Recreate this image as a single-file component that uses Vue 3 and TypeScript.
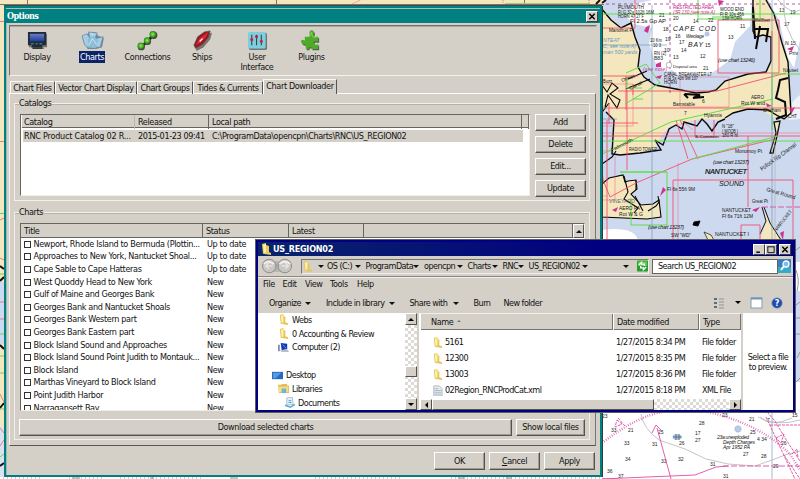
<script setup lang="ts">
interface MapText { x: number; y: number; t: string; s?: number; w?: number; c?: string; r?: number }

const tools = [
  { name: 'Display', w: 54 },
  { name: 'Charts', w: 56 },
  { name: 'Connections', w: 55 },
  { name: 'Ships', w: 54 },
  { name: 'User Interface', w: 56 },
  { name: 'Plugins', w: 53 },
]
const tabs = [
  { name: 'Chart Files', w: 45 },
  { name: 'Vector Chart Display', w: 82 },
  { name: 'Chart Groups', w: 56 },
  { name: 'Tides & Currents', w: 70 },
  { name: 'Chart Downloader', w: 74 },
]
const catalogButtons = ['Add', 'Delete', 'Edit...', 'Update']
const charts: [string, string][] = [
  ['Newport, Rhode Island to Bermuda (Plottin...', 'Up to date'],
  ['Approaches to New York, Nantucket Shoal...', 'Up to date'],
  ['Cape Sable to Cape Hatteras', 'Up to date'],
  ['West Quoddy Head to New York', 'New'],
  ['Gulf of Maine and Georges Bank', 'New'],
  ['Georges Bank and Nantucket Shoals', 'New'],
  ['Georges Bank Western part', 'New'],
  ['Georges Bank Eastern part', 'New'],
  ['Block Island Sound and Approaches', 'New'],
  ['Block Island Sound Point Judith to Montauk...', 'New'],
  ['Block Island', 'New'],
  ['Marthas Vineyard to Block Island', 'New'],
  ['Point Judith Harbor', 'New'],
  ['Narragansett Bay', 'New'],
]
const crumbs = [
  { name: 'OS (C:)', w: 38.5 },
  { name: 'ProgramData', w: 58.5 },
  { name: 'opencpn', w: 43.5 },
  { name: 'Charts', w: 35 },
  { name: 'RNC', w: 26 },
  { name: 'US_REGION02', w: 64 },
]
const menus = [
  { name: 'File', w: 19.5 }, { name: 'Edit', w: 22.5 }, { name: 'View', w: 25 },
  { name: 'Tools', w: 27 }, { name: 'Help', w: 20 },
]
const commands = [
  { name: 'Organize', w: 57, arrow: true },
  { name: 'Include in library', w: 83.5, arrow: true },
  { name: 'Share with', w: 64, arrow: true },
  { name: 'Burn', w: 30, arrow: false },
  { name: 'New folder', w: 50, arrow: false },
]
const files = [
  { name: '5161', date: '1/27/2015 8:34 PM', type: 'File folder' },
  { name: '12300', date: '1/27/2015 8:35 PM', type: 'File folder' },
  { name: '13003', date: '1/27/2015 8:36 PM', type: 'File folder' },
  { name: '02Region_RNCProdCat.xml', date: '1/27/2015 8:18 PM', type: 'XML File' },
]

const labels: MapText[] = [
  { x: 618, y: 9, t: 'PLYMOUTH', w: 26 }, { x: 618, y: 13.5, t: 'Fl G 32s 102ft 16M', w: 36 }, { x: 618, y: 18, t: 'HORN 47 27 F', w: 26 },
  { x: 720, y: 11, t: 'WOOD END', w: 24 }, { x: 720, y: 15.5, t: 'Fl R 10s 45ft', w: 24 }, { x: 722, y: 20, t: '13M HORN', w: 20 },
  { x: 609, y: 32, t: 'Manomet Pt', w: 25 }, { x: 630, y: 23, t: 'Fl 2.5s Gp AP', w: 36, s: 4.5 },
  { x: 650, y: 42, t: '10 Km', w: 12 }, { x: 653, y: 47, t: '10 3', w: 8 }, { x: 654, y: 55, t: 'RN (2)', w: 12 }, { x: 654, y: 60, t: 'B83', w: 9 },
  { x: 673, y: 67.5, t: 'Disposal area', w: 24, s: 4 },
  { x: 664, y: 75.5, t: 'CANAL BREAKWATER LT', w: 48 }, { x: 664, y: 79.8, t: 'Fl R 5s 43ft 9M 107', w: 34 }, { x: 664, y: 84.2, t: 'HORN', w: 13 },
  { x: 673, y: 106, t: 'Barnstable', w: 22 }, { x: 704, y: 117, t: 'Hyannis', w: 18 }, { x: 754, y: 22, t: 'Wellfleet', w: 16 },
  { x: 751, y: 99, t: 'AERO', w: 13, s: 5.5 }, { x: 741, y: 104.5, t: 'Rot W and', w: 24, s: 5.5 }, { x: 763, y: 112, t: 'Chatham', w: 18 },
  { x: 629, y: 151, t: 'RADIO TOWER', w: 28 }, { x: 722, y: 128, t: 'N "18"', w: 12 }, { x: 722, y: 132.7, t: '( WOOB )', w: 16 }, { x: 722, y: 137.4, t: '180 R ht', w: 16 },
  { x: 695, y: 138, t: 'S Common', w: 24, s: 4 }, { x: 735, y: 153, t: 'Monomoy Pt', w: 27 },
  { x: 667, y: 191, t: 'Fl 6s 55ft 9M', w: 28, s: 5.5 }, { x: 609, y: 203, t: 'VINEYARD', w: 26, c: '#667' },
  { x: 619, y: 210, t: 'AERO PA', w: 21, s: 5.2 }, { x: 619, y: 216, t: 'Rot W & G', w: 24, s: 5.2 },
  { x: 752, y: 203, t: 'Great Pt', w: 16 }, { x: 722, y: 212, t: 'NANTUCKET', w: 29, s: 5.2 }, { x: 722, y: 217.5, t: 'Fl 6s 71ft 12M', w: 31, s: 5.2 },
  { x: 715, y: 236, t: 'NANTUCKET I', w: 34, s: 6 }, { x: 671, y: 237, t: 'SW "WD"', w: 20 },
  { x: 612, y: 152, t: 'Falmouth', w: 24, r: -28 }, { x: 762, y: 171, t: 'Pollock Rip Channel', w: 43, s: 6, r: -36 },
  { x: 766, y: 191, t: 'Great Round', w: 30, s: 5.6, r: 16 }, { x: 776, y: 232, t: 'NANTUCKET', w: 26, r: -52 },
  { x: 785, y: 45, t: 'N 15', w: 11 }, { x: 789, y: 55, t: 'Priv', w: 9 }, { x: 783, y: 72, t: 'Nauset', w: 15 }, { x: 788, y: 118, t: 'CHT', w: 9 },
  { x: 622, y: 82, t: 'Onset', w: 14, r: -20 }, { x: 630, y: 90, t: 'Canal', w: 14, r: -26 }, { x: 603, y: 83, t: 'Buzz', w: 9 },
]
const italics: MapText[] = [
  { x: 673, y: 31, t: 'CAPE COD', s: 6.8, w: 43 }, { x: 688, y: 46.5, t: 'BAY', s: 6.8, w: 15 }, { x: 686, y: 38, t: 'Wreckage', s: 4.5, w: 18 },
  { x: 718, y: 62, t: '(use chart 13246)', s: 5.3, w: 37 }, { x: 713, y: 164, t: '(use chart 13237)', s: 5.3, w: 36 }, { x: 648, y: 229, t: '(use chart 13237)', s: 5.3, w: 36 },
]
const sounding: [number, number, string][] = [
  [659, 17, '21'], [673, 19.5, '20'], [663, 31, '18'], [693, 23, '14'], [679, 44, '17'], [673, 59, '13'], [705, 46.5, '15'],
  [675, 38, '16'], [728, 39, '13'], [700, 58, '12'], [740, 28, '11'], [665, 41, '19'], [664, 52, '10'], [681, 52, '14'],
  [703, 70, '21'], [708, 22, '22'], [779, 12, '13'], [784, 26, '17'], [790, 14, '19'], [702, 103, '6'],
  [684, 115, '7'], [628, 432, '21'], [611, 432, '33'], [602, 418, '23'], [624, 445, '33'], [625, 461, '34'], [607, 473, '36'],
  [618, 478, '37'], [652, 446, '31'], [658, 434, '25'], [679, 445, '26'], [678, 461, '32'], [695, 442, '27'], [699, 425, '28'],
  [695, 435, '17'], [710, 466, '31'], [661, 463, '33'], [722, 417, '23'], [750, 434, '25'], [743, 456, '27'], [761, 458, '28'],
  [757, 441, '4 34'], [749, 421, '21'], [767, 422, '7'], [781, 445, '26'], [792, 417, '15'], [773, 468, '29'], [723, 478, '31'],
]
</script>

<template>
  <main class="desktop">
    <svg class="sea-map" viewBox="0 0 800 479" width="800" height="479">
      <rect width="800" height="479" fill="#f4e7bd" />
      <path d="M601 0V9L606 14L611 20L621 27L631 24L635 37L640 50L638 67L644 77L655 85L676 89L702 92L714 90L725 81L748 74L765 73L771 64V37L762 36L757 38L753 31V0Z" fill="#cdd9ee" />
      <path d="M600 22L610 20L600 6Z" fill="#f4e7bd" />
      <path d="M634 4L652 0H752L750 26L735 42L730 60L712 73L700 75L688 73L680 77L672 70L665 72L656 64L649 44L652 28L634 24L627 18Z" fill="#fff" />
      <path d="M766 0L774 14L782 42L788 60L791 112L784 120L775 118L758 108L733 113L725 120L700 119L682 123L670 126L661 137L656 148L640 153L620 155L612 150L614 120L605 108L600 100V240H800V0Z" fill="#cdd9ee" />
      <path d="M768 0H800V40L794 68L788 58L779 20Z" fill="#fff" />
      <path d="M800 95Q790 101 789 113V120L800 119Z" fill="#fff" opacity=".65" />
      <path d="M602 230Q634 226 638 240H602Z" fill="#fff" />
      <path d="M600 412H800V479H600Z" fill="#fff" />
      <path d="M602 184L609 178L623 175L625 182L628 181L636 180L637 189L631 194L641 205L653 204L659 200L661 217L647 219L624 218L602 217Z" fill="#f4e7bd" stroke="#000" stroke-width="1.1" />
      <path d="M764 212L781 240H760L766 222Z" fill="#f4e7bd" />
      <path d="M762 207L766 221L760 234M764 207L770 223L781 240" fill="none" stroke="#111" stroke-width="1" />
      <path d="M780 121L777 136L773 153L770 153L776 133L774 122Z" fill="#f4e7bd" stroke="#111" stroke-width="1.3" />
      <path d="M704 232L711 235L714 240H708Z" fill="#f4e7bd" stroke="#111" stroke-width=".7" />
      <path d="M694 222L700 221L698 226L693 225Z" stroke="#111" />
      <g fill="none" stroke="#080808" stroke-width="1.4">
        <path d="M601 8L606 14L611 20L621 28L631 23L635 37L640 50L638 67L644 77L655 85L676 89L696 93L708 92L716 90L725 81L748 74L766 72L771 61V37L763 35L756 37L753 31V0" />
        <path d="M766 0L774 14L782 43L788 62L791 113L784 119L778 116L768 110L748 109L733 113L725 118" />
        <path d="M685 94L700 95L693 98L704 97M684 94L688 98M753 7L755 39M760 26L756 49M755 29H768L766 42M788 78L780 80L778 90L776 98L785 102L786 115L776 119" stroke-width="2" />
        <path d="M725 119L718 122L712 131L707 124L702 119L697 126L684 122L682 129L676 125L669 129L663 145L655 140L661 150L640 153L620 155L612 154L614 120L606 112" />
        <path d="M602 85L607 92L612 83L618 88L610 94L620 100L617 108L608 95L605 107M602 164L612 157L616 151M600 115L609 103M628 79L647 71M626 89L650 79M624 176L628 192L624 199L638 208L634 213M636 181L636 190M648 211L656 206L659 202L658 196M635 196L643 211" stroke-width="1.1" />
      </g>
      <g fill="none" stroke="#f4506c" stroke-width=".9">
        <path d="M600 28H635V0M600 76H638M600 136H800M618 91H717L786 73M718 20H779V73H718ZM603 108H800M626 76V110M772 31V60M600 123H638M607 120V240M627 90V170M673 240V180H793V240M741 225H760V240H741ZM633 84V95M609 103V124M748 136V207M714 120V137H695V120M601 160L603 180L610 197L636 183L692 159L775 139M676 120L688 159M680 120L698 159" />
        <path d="M680 77H729V107H680ZM678 163V240M600 133H800M601 84H633V126H600M600 196H607M601 151H613M615 156V200H601M681 120L693 130" opacity=".5" />
      </g>
      <g fill="none" stroke="#62dc48" stroke-width="1">
        <path d="M698 0V19M698 19H760V0M600 14H800M712 17H740M772 73V130M772 74H800M600 141H800M626 73L646 64L660 83L625 104M627 77V88H642M633 99H643M620 172H667V225H631V198M600 155L671 122L773 99M692 159L778 136" />
        <path d="M620 172H667V172" />
      </g>
      <path d="M652 5V240M772 0V240M600 119H617M772 412V479M600 45H667" fill="none" stroke="#668fb6" stroke-width=".6" />
      <path d="M670 0V96M600 4H800" fill="none" stroke="#a82d83" stroke-width=".8" stroke-dasharray="3 3" />
      <g class="map-label">
        <text v-for="l in labels" :key="l.t + l.x" :x="l.x" :y="l.y" :font-size="l.s ?? 4.8" :textLength="l.w" lengthAdjust="spacingAndGlyphs" :fill="l.c ?? '#151515'" :transform="l.r ? `rotate(${l.r} ${l.x} ${l.y})` : undefined">{{ l.t }}</text>
        <text v-for="s in sounding" :key="`${s[0]}-${s[1]}`" :x="s[0]" :y="s[1]" font-size="5" fill="#222">{{ s[2] }}</text>
        <g class="map-italic">
          <text v-for="l in italics" :key="l.t + l.y" :x="l.x" :y="l.y" :font-size="l.s" :textLength="l.w">{{ l.t }}</text>
          <text x="705" y="174" font-size="7.3" stroke="#111" stroke-width=".2" textLength="42">NANTUCKET</text>
          <text x="719" y="186" font-size="7" textLength="25">SOUND</text>
          <text x="717" y="438.5" font-size="5" textLength="32">23a unexploded</text>
          <text x="723" y="443.8" font-size="5" textLength="32">Depth Charges</text>
          <text x="723" y="449" font-size="5" textLength="27">Apr 1952 PA</text>
        </g>
        <g fill="#cb2a91" font-style="italic" font-size="4.8">
          <text x="673" y="9" textLength="41">RESTRICTED AREA</text><text x="673" y="13.5" textLength="42">(3R 130 (see note A)</text>
          <text x="643" y="71" textLength="24">(see note)</text>
        </g>
        <g fill="#5d9cc7" font-style="italic" font-size="5.2">
          <text x="603" y="42">NTEAT</text><text x="603" y="48">C, see note A)</text><text x="603" y="54">man 500 yards</text>
        </g>
      </g>
      <path fill="#d1318f" d="M718 0L724 1L719 6ZM646 27L650 25L648 33L644 31ZM656 64L661 62L661 67L656 67ZM655 77L662 75L660 79ZM766 103L772 106L767 107ZM787 49L794 46L792 51ZM789 110L795 107L792 113ZM663 187L666 190L660 196ZM752 210L760 207L756 212ZM612 210L618 207L616 212ZM780 233L784 231L783 240Z" />
      <circle cx="707" cy="34" r="2.5" fill="#b6c8e5" /><circle cx="669" cy="65" r="2.8" fill="#fff" stroke="#888" stroke-width=".6" />
      <circle cx="738" cy="429" r="3.2" fill="#b9caea" stroke="#7892ba" stroke-dasharray="1 1" stroke-width=".6" />
      <ellipse cx="677" cy="437" rx="4.5" ry="3" fill="#abc2df" /><path d="M673 437H682M676 434V440M679 434V440" stroke="#456" stroke-width=".7" />
      <g fill="none" stroke="#b5b5b5" stroke-width=".8">
        <path d="M641 414Q643 428 659 440L685 449L706 459L728 464L755 466L772 460L785 455L800 451M760 417Q770 428 792 418M800 420Q776 427 758 417" />
        <path d="M778 0Q792 16 800 10M784 0Q782 29 800 50M775 145V240" />
      </g>
      <g fill="none" stroke="#df4da3" stroke-width=".9">
        <path d="M602 443Q637 416 663 412M708 412Q760 424 790 454L800 470" stroke-width="2.4" stroke-dasharray=".7 1.7" />
        <path d="M618 479H600L695 475L716 467L728 466M671 479L657 428M652 433L656 425L661 430" />
        <path d="M723 466H800M762 207H800" stroke-dasharray="6 2" /><path d="M770 425H800M784 455L800 479M617 420L622 424L615 427ZM618 418L625 426M776 438L784 434L781 443ZM792 454L797 449L798 458M767 412L775 421L785 438L800 461M766 417L795 479" stroke-dasharray="3 1" />
      </g>
      <!-- narrow margins beside and above the dialog -->
      <rect width="604" height="5" fill="#f4e7bd" /><path d="M0 4.5H604" stroke="#75756c" />
      <path d="M27.5 0V5M276.5 0V5M524.5 0V4" stroke="#77736a" /><path d="M352 4L361 0M503 0V4M589 0V4" stroke="#e97984" stroke-dasharray="1 1" />
      <path d="M505 3.5H590" stroke="#a4cf78" /><path d="M596 4L600 0M602 3L606 0" stroke="#111" stroke-width="2" />
      <rect y="5" width="5" height="474" fill="#f4e7bd" /><rect y="282" width="5" height="62" fill="#cdd9ee" /><rect y="427" width="5" height="52" fill="#dbe2ef" />
      <path d="M0 21.5H4M0 141.5H4M0 220L4 218M0 258L4 260M0 302H4M0 319H4M0 394L4 402M0 428L4 433M0 446L4 440" stroke="#ee7888" stroke-width="1" />
      <path d="M0 213.5H4M0 274H4M0 334H4M0 356H4M0 373H4M0 409H4M0 457L4 454" stroke="#68d651" stroke-width="1" />
      <path d="M0 266L4 269M0 281L4 277M0 345L4 349M0 408L4 403M0 466L4 463" stroke="#111" stroke-width="2" />
      <rect y="477" width="602" height="2" fill="#fff" /><path d="M3 478H43M69 478H102M120 478H204M315 478H400M451 478H602" stroke="#df80ae" stroke-dasharray="1 3" /><path d="M72 478H80M150 478H154M230 478H238M458 478H465M506 478H512" stroke="#888" stroke-width="1" />
      <rect x="796" y="240" width="4" height="172" fill="#cdd9ee" /><rect x="796" y="262" width="4" height="29" fill="#fff" /><rect x="796" y="382" width="4" height="30" fill="#fff" /><path d="M796 250L800 247M796 270Q800 280 797 291M796 305L800 302M796 318H800M796 334H800M797 358L800 352M796 382L800 378" stroke="#999" fill="none" />
    </svg>

    <section class="options">
      <header class="options-title"><span>Options</span><button class="winbtn"><svg viewBox="0 0 10 10"><path d="M2 2L8 8M8 2L2 8" /></svg></button></header>
      <nav class="tools">
        <div v-for="(tool, i) in tools" :key="tool.name" class="tool" :style="{ width: tool.w + 'px' }">
          <svg class="tool-icon" viewBox="0 0 24 22">
            <defs>
              <linearGradient id="screen" x2="0" y2="1"><stop stop-color="#697fc2" /><stop offset="1" stop-color="#1e3a98" /></linearGradient>
              <radialGradient id="green"><stop stop-color="#99ed55" /><stop offset="1" stop-color="#278b16" /></radialGradient>
            </defs>
            <g v-if="i === 0"><path d="M3 4H22V18H18L19 20H7L5 18H3Z" fill="#77736e" /><path d="M2 2H21V16H17V18H6V16H2Z" fill="#222a36" /><path d="M4 4H19V12H4Z" fill="url(#screen)" /><path d="M5 14.5H8M10 14.5H12M14 14.5H17" stroke="#28bbba" /><path d="M7 19H17" stroke="#111" /></g>
            <g v-else-if="i === 1"><path d="M1 7L7 4L8 2L15 2L18 6L24 8L22 18L16 20L7 20L3 14Z" fill="#73899a" /><path d="M1 6L6 4L10 9L8 19L4 16ZM8 2L17 3L14 10L9 8ZM12 10L23 7L20 18L10 18Z" fill="#a8cce2" stroke="#5e87a4" stroke-width=".7" /><path d="M7 9L13 6L18 11L15 19L7 18Z" fill="#8ebdda" /><path d="M8 16L12 9L16 15M10 4L13 5" fill="none" stroke="#d4e8ef" /></g>
            <g v-else-if="i === 2"><path d="M6 17L12 12L18 5" stroke="#222" stroke-width="3" /><circle cx="5.5" cy="17.5" r="3.8" fill="#434b37" /><circle cx="5" cy="16.5" r="3.4" fill="url(#green)" /><circle cx="12" cy="12" r="3.7" fill="#434b37" /><circle cx="11.5" cy="11" r="3.3" fill="url(#green)" /><circle cx="18.5" cy="5.5" r="3.8" fill="#434b37" /><circle cx="17.5" cy="4.5" r="3.4" fill="url(#green)" /></g>
            <g v-else-if="i === 3"><path d="M4 18L8 9L15 4L22 3L20 10L13 18L6 22Z" fill="#77736e" /><path d="M3 16L7 7L14 2L20 1L18 8L12 15L5 19Z" fill="#9d1520" stroke="#555" stroke-width=".8" /><path d="M5 16L9 9L18 2L15 8L10 13Z" fill="#d92e31" /><path d="M9 12L12 9" stroke="#fff" stroke-width="1.3" /></g>
            <g v-else-if="i === 4"><rect x="3" y="3" width="19" height="18" rx="2" fill="#6e777c" /><rect x="2" y="2" width="18.5" height="17.5" rx="2" fill="#80cde0" /><path d="M6 5V16M11 5V16M16 5V16" stroke="#1f535c" stroke-width="1.2" /><path d="M4.5 10H7.5M9.5 7H12.5M14.5 12H17.5" stroke="#e11620" stroke-width="2.3" /></g>
            <g v-else><path d="M4 7H9V5Q8 1 11 0Q15 1 13 5V7H18V12H16Q13 11 13 14Q14 16 18 15V20H11V18H8V20H5V15Q1 16 0 12Q0 9 4 11Z" transform="translate(2 1.3)" fill="#536348" /><path d="M4 7H9V5Q8 1 11 0Q15 1 13 5V7H18V12H16Q13 11 13 14Q14 16 18 15V20H11V18H8V20H5V15Q1 16 0 12Q0 9 4 11Z" transform="translate(1 0)" fill="#4fac2a" /><path d="M11 6L12 2L13 7L17 8" fill="none" stroke="#80d356" /></g>
          </svg>
          <span :class="{ selected: i === 1, narrow: i === 4 }">{{ tool.name }}</span>
        </div>
      </nav>
      <div class="tabs"><div v-for="(tab, i) in tabs" :key="tab.name" class="tab" :class="{ active: i === 4 }" :style="{ width: tab.w + 'px' }">{{ tab.name }}</div></div>
      <div class="page">
        <section class="group catalogs">
          <h2>Catalogs</h2>
          <div class="catalog-body">
            <div class="list catalog-list">
              <div class="heads catalog-heads"><span>Catalog</span><span>Released</span><span>Local path</span><span></span></div>
              <div class="catalog-row"><span class="wide">RNC Product Catalog 02 R...</span><span>2015-01-23 09:41</span><span>C:\ProgramData\opencpn\Charts\RNC\US_REGION02</span></div>
            </div>
            <div class="side-buttons"><button v-for="b in catalogButtons" :key="b" class="btn">{{ b }}</button></div>
          </div>
        </section>
        <section class="group charts">
          <h2>Charts</h2>
          <div class="list chart-list">
            <div class="heads chart-heads"><span>Title</span><span>Status</span><span>Latest</span><span></span><i class="up"></i></div>
            <div v-for="c in charts" :key="c[0]" class="chart-row"><i class="check"></i><span>{{ c[0] }}</span><span>{{ c[1] }}</span></div>
          </div>
          <div class="group-actions"><button class="btn">Download selected charts</button><button class="btn">Show local files</button></div>
        </section>
      </div>
      <footer><button class="btn">OK</button><button class="btn"><u>C</u>ancel</button><button class="btn">Apply</button></footer>
    </section>

    <section class="explorer">
      <header class="explorer-title">
        <svg class="folder" viewBox="0 0 12 12"><path d="M2 1L6 0V10L3 11ZM6 2L9 3V9L11 10V12L4 11Z" fill="#e9c960" /><path d="M3 2L6 1V9L4 10Z" fill="#fff0a2" /></svg>
        <span>US_REGION02</span>
        <button class="winbtn"><svg viewBox="0 0 10 10"><path d="M2 8H6" /></svg></button><button class="winbtn"><svg viewBox="0 0 10 10"><path d="M1 2H9M1.5 2V8.5H8.5V2" stroke-width="1" /></svg></button><button class="winbtn close"><svg viewBox="0 0 10 10"><path d="M2 2L8 8M8 2L2 8" /></svg></button>
      </header>
      <div class="address-line">
        <svg class="history" viewBox="0 0 35 16"><rect x="8" y="3" width="18" height="11" fill="#b5b3af" /><circle cx="8.5" cy="8" r="7" fill="#c8c6c2" stroke="#8c8b88" /><circle cx="24.5" cy="8" r="7" fill="#c8c6c2" stroke="#8c8b88" /><path d="M3 6Q8 1 13 6M19 6Q24 1 30 6" stroke="#eee" stroke-width="2" fill="none" /><path d="M12 8H5L8 5M5 8L8 11M21 8H28L25 5M28 8L25 11" stroke="#e5e3df" fill="none" stroke-width="1.5" /></svg>
        <div class="address">
          <svg class="folder" viewBox="0 0 12 12"><path d="M2 1L6 0V10L3 11ZM6 2L8 3V9L11 10V12L4 11Z" fill="#e5c55d" /><path d="M3 2L6 1V9L4 10Z" fill="#fff0a2" /></svg>
          <i class="tri first"></i><span v-for="c in crumbs" :key="c.name" class="crumb" :style="{ width: c.w + 'px' }">{{ c.name }}<i class="tri"></i></span>
          <i class="tri history-arrow"></i><svg class="refresh" viewBox="0 0 12 12"><rect width="12" height="12" rx="1" fill="#269d31" /><rect x="1" y="1" width="10" height="5" fill="#62cb4c" /><path d="M2 5L5 2V4H8V6M10 7L7 10V8H4V6" stroke="#fff" fill="none" stroke-width="1.5" /></svg>
        </div>
        <div class="search">Search US_REGION02</div><svg class="search-icon" viewBox="0 0 13 14"><rect width="13" height="14" rx="1" fill="#397ebd" /><rect y="8" width="13" height="6" fill="#35abc9" /><circle cx="8" cy="5" r="3" fill="#83b8eb" stroke="#fff" stroke-width="1.3" /><path d="M6 7L3 11" stroke="#fff" stroke-width="2" /></svg>
      </div>
      <nav class="menus"><span v-for="m in menus" :key="m.name" :style="{ width: m.w + 'px' }">{{ m.name }}</span></nav>
      <div class="commands">
        <span v-for="c in commands" :key="c.name" :style="{ width: c.w + 'px' }">{{ c.name }}<i v-if="c.arrow" class="tri"></i></span>
        <svg class="view-icons" viewBox="0 0 70 14"><path d="M1 3H4M1 7H4M1 11H4" stroke="#58707b" stroke-width="2" /><path d="M6 3H11M6 6H11M6 9H11M6 12H11" stroke="#8b9598" stroke-width="1" /><path d="M22 5H28L25 8Z" /><rect x="38" y="2" width="11" height="10" fill="#fff" stroke="#819eb2" /><path d="M38 2.5H49" stroke="#7194ad" stroke-width="2" /><circle cx="64" cy="7" r="5.3" fill="#2349ab" stroke="#8ca8dd" stroke-width=".7" /><text x="64" y="10" text-anchor="middle" fill="#fff" font-size="9" font-weight="bold">?</text></svg>
      </div>
      <div class="content">
        <aside class="tree">
          <div class="leaf"><svg class="folder" viewBox="0 0 12 12"><path d="M2 1L6 0V10L3 11ZM6 2L8 3V9L11 10V12L4 11Z" fill="#e5c55d" /><path d="M3 2L6 1V9L4 10Z" fill="#fff0a2" /></svg>Webs</div>
          <div class="leaf"><svg class="folder" viewBox="0 0 12 12"><path d="M2 1L6 0V10L3 11ZM6 2L8 3V9L11 10V12L4 11Z" fill="#e5c55d" /><path d="M3 2L6 1V9L4 10Z" fill="#fff0a2" /></svg>0 Accounting &amp; Review</div>
          <div class="leaf"><svg class="folder" viewBox="0 0 12 12"><path d="M0 3H2V10H0Z" fill="#8790a0" /><path d="M3 1L10 2V8L4 9Z" fill="#1638bd" /><path d="M5 3L9 7" stroke="#62a2ef" /><path d="M2 9L10 8L12 11H4Z" fill="#b8bdc8" /></svg>Computer (2)</div>
          <div class="leaf"></div>
          <div class="leaf desktop-leaf"><svg class="folder" viewBox="0 0 12 12"><rect y="2" width="12" height="8" fill="#246bc0" /><path d="M1 3H10L4 9H1Z" fill="#5799df" /></svg>Desktop</div>
          <div class="leaf"><svg class="folder" viewBox="0 0 12 12"><path d="M0 2H4V1H10V3H12V11H1Z" fill="#e3bd5c" /><path d="M1 4H11V10H1Z" fill="#f7de89" /><path d="M4 6H9V11H4Z" fill="#75b3cf" /></svg>Libraries</div>
          <div class="leaf doc"><svg class="folder" viewBox="0 0 12 12"><path d="M3 1L9 0L10 8L3 9Z" fill="#e5eef5" stroke="#8aa6bf" stroke-width=".7" /><path d="M5 4H8M5 6H8" stroke="#3fa1cf" /><path d="M1 9L7 11L12 8" stroke="#5aa9d2" fill="none" stroke-width="1.6" /></svg>Documents</div>
        </aside>
        <div class="vscroll"><i class="arrowbox au"></i><i class="thumb"></i><i class="arrowbox ad"></i></div>
        <div class="files">
          <div class="file-heads"><span>Name <i class="sort"></i></span><span>Date modified</span><span>Type</span></div>
          <div v-for="(f, i) in files" :key="f.name" class="file-row">
            <svg class="folder" viewBox="0 0 12 12"><g v-if="i < 3"><path d="M2 1L6 0V10L3 11ZM6 2L8 3V9L11 10V12L4 11Z" fill="#e5c55d" /><path d="M3 2L6 1V9L4 10Z" fill="#fff0a2" /></g><g v-else><path d="M2 1H8L11 4V12H2Z" fill="#e8edf0" stroke="#aab8bf" /><path d="M3 4H7M3 6H10M3 8H10M3 10H10" stroke="#a0b7c2" /></g></svg>
            <span>{{ f.name }}</span><span class="fdate">{{ f.date }}</span><span>{{ f.type }}</span>
          </div>
          <div class="hscroll"><i class="arrowbox al"></i><i class="hthumb"></i><i class="arrowbox ar"></i></div>
        </div>
        <aside class="preview">Select a file<br>to preview.</aside>
      </div>
    </section>
  </main>
</template>

<style>
html, body { margin: 0; overflow: hidden; }
</style>
<style scoped>
.desktop { position: relative; width: 800px; height: 479px; overflow: hidden; font-family: "DejaVu Sans Condensed", "DejaVu Sans", sans-serif; font-stretch: condensed; font-size: 9px; letter-spacing: -.38px; line-height: 12px; color: #111; white-space: nowrap; }
.desktop * { box-sizing: border-box; }
.sea-map { display: block; }
.map-label { font-family: "Liberation Sans", Arial, sans-serif; letter-spacing: 0; }
.map-italic { font-style: italic; fill: #111; }
.options { position: absolute; left: 4px; top: 6px; width: 598px; height: 471px; background: #d4d0c8; border: 2px solid #008080; box-shadow: inset 1px 1px #9eb9b4, 1px 0 #313c3a, 0 -1px #434c44; }
.options-title { height: 15px; background: #008080; border-top: 1px solid #a7c1b9; display: flex; align-items: center; color: #fff; padding: 0 2px 0 1px; font: bold 9px/12px "DejaVu Serif Condensed", "DejaVu Serif", serif; letter-spacing: -.6px; }
.winbtn { margin: 0 0 0 auto; padding: 0; width: 12px; height: 11px; display: block; background: #d4d0c8; border: 1px solid; border-color: #fff #404040 #404040 #fff; }
.winbtn svg { display: block; width: 10px; height: 9px; fill: none; stroke: #000; stroke-width: 1.6; }
.tools { height: 51px; margin: 2px 3px 0; padding: 4px 0 0; display: flex; border: 1px solid; border-color: #73706b #d4d0c8 #f4f2ed #73706b; box-shadow: inset 0 1px #aaa69f; }
.tool { display: flex; flex-direction: column; align-items: center; text-align: center; line-height: 10px; }
.tool-icon { width: 23px; height: 21px; flex: none; }
.tool span { padding: 1px 1px 0; height: 12px; white-space: nowrap; }
.tool .narrow { width: 40px; white-space: normal; }
.tool .selected { background: #0a246a; color: #fff; }
.tabs { position: relative; height: 15px; margin: 3px 0 0 4px; display: flex; align-items: flex-end; }
.tab { height: 13px; line-height: 12px; text-align: center; border-top: 1px solid #f8f6f0; border-left: 1px solid #fff; border-right: 1px solid #555; }
.tab.active { height: 15px; line-height: 12px; background: #d4d0c8; }
.page { height: 353px; margin: -1px 4px 0 3px; padding: 9px 5px 0 4px; border: 1px solid; border-color: #fff #77736e #555 #f6f4ef; }
.group { border: 1px solid #f2efe9; box-shadow: inset 0 1px #b6b2aa; padding: 0 3px 0 5px; }
.group h2 { width: max-content; height: 10px; margin: -5px 0 0 -1px; padding: 0 1px 0 0; background: #d4d0c8; font: inherit; line-height: 9px; }
.catalogs { height: 98px; }
.catalog-body { display: flex; gap: 5px; margin-top: 5px; }
.list { background: #fff; border: 1px solid; border-color: #68645e #f2efe9 #f2efe9 #68645e; overflow: hidden; }
.catalog-list { width: 510px; height: 82px; padding-left: 1px; flex: none; }
.heads { display: grid; height: 14px; background: #d4d0c8; border-bottom: 1px solid #68645e; line-height: 14px; }
.heads span { border-right: 1px solid #68645e; padding-left: 2px; }
.catalog-heads { height: 13px; grid-template-columns: 113px 74px 313px 1fr; }
.catalog-heads span { padding-left: 3px; }
.catalog-heads span:first-child { border-right-color: #bbb7af; padding-left: 2px; }
.catalog-row { display: grid; grid-template-columns: 114px 74px 1fr; width: 500px; height: 12px; margin: 2px 0 0 1px; padding-left: 1px; background: #d4d0c8; }
.wide { letter-spacing: -.22px; }
.side-buttons { display: flex; flex-direction: column; gap: 5px; }
.btn { background: #d4d0c8; color: inherit; border: 1px solid; border-color: #fff #55514d #55514d #fff; box-shadow: inset -1px -1px #a09c95; font: inherit; letter-spacing: inherit; padding: 0; line-height: 13px; text-align: center; }
.side-buttons .btn { width: 51px; height: 17px; }
.charts { height: 228px; margin-top: 11px; }
.chart-list { width: 565px; height: 188px; margin-top: 5px; }
.chart-heads { grid-template-columns: 182px 86px 75px 1fr 11px; }
.chart-heads span { padding-left: 3px; }
.up { border: 1px solid; border-color: #fff #555 #555 #fff; display: grid; place-items: center; }
.up::after { content: ""; border: 3px solid transparent; border-top: 0; border-bottom-color: #111; }
.chart-row { height: 12.6px; display: grid; grid-template-columns: 9.5px 173.5px 1fr; align-items: center; padding-left: 3px; letter-spacing: -.34px; line-height: 11px; }
.check { width: 7px; height: 7px; border: 1px solid #333; }
.group-actions { display: flex; justify-content: space-between; margin: 8px 1px 0 -1px; }
.group-actions .btn { width: 69px; height: 17px; }
.group-actions .btn:first-child { width: 493px; }
footer { display: flex; justify-content: flex-end; gap: 4px; margin: 6px 5px 0 0; }
footer .btn { width: 51px; height: 18px; line-height: 15px; }
.explorer { position: absolute; left: 256px; top: 240px; width: 539px; height: 172px; background: #d4d0c8; border: 2px solid #000080; outline: 1px solid #5c5c5c; letter-spacing: -.53px; display: flex; flex-direction: column; }
.explorer-title { height: 14px; display: flex; align-items: center; padding: 0 2px; color: #fff; background: linear-gradient(90deg, #0a246a, #000080 65%); font-weight: 700; letter-spacing: -.25px; flex: none; }
.explorer-title .folder { width: 12px; height: 12px; margin-right: 1px; }
.explorer-title .winbtn ~ .winbtn { margin-left: 0; }
.explorer-title .winbtn.close { margin-left: 2px; }
.address-line { height: 21px; display: flex; align-items: center; border-bottom: 1px solid #8b8780; box-shadow: 0 1px #f0eee9; padding-left: 3px; flex: none; }
.history { width: 34px; height: 16px; margin-right: 6px; flex: none; }
.address { width: 348px; height: 15px; display: flex; align-items: center; border: 1px solid; border-color: #77736e #eee #eee #77736e; flex: none; }
.folder { width: 11px; height: 11px; flex: none; }
.tri { display: inline-block; width: 0; height: 0; border: 3px solid transparent; border-top: 3px solid #111; border-bottom: 0; flex: none; }
.first { margin: 0 2px 0 5px; }
.crumb { display: flex; align-items: center; justify-content: space-between; padding: 0 4px 0 1px; flex: none; }
.history-arrow { margin-left: auto; margin-right: 8px; }
.refresh { width: 11px; height: 12px; }
.search { margin-left: 3px; width: 126px; height: 15px; line-height: 13px; background: #fff; border: 1px solid #68645e; padding-left: 5px; }
.search-icon { width: 13px; height: 14px; }
.menus { display: flex; height: 16px; line-height: 15px; padding-left: 5px; letter-spacing: -.4px; flex: none; }
.commands { display: flex; align-items: center; height: 20px; padding-left: 11px; flex: none; }
.commands > span { display: flex; align-items: center; justify-content: space-between; padding-right: 15px; flex: none; }
.view-icons { margin-left: auto; margin-right: 10px; width: 70px; height: 14px; letter-spacing: 0; }
.content { display: flex; height: 97px; background: #fff; }
.tree { width: 147px; overflow: hidden; }
.leaf { display: flex; height: 13.8px; align-items: center; gap: 3px; padding-left: 20px; }
.desktop-leaf { padding-left: 14px; }
.doc { padding-left: 26px; }
.vscroll { width: 12px; display: flex; flex-direction: column; background: repeating-conic-gradient(#dedbd6 0 25%, #fff 0 50%) 0 0 / 6px 6px; }
.arrowbox, .thumb, .hthumb { display: block; background: #d4d0c8; border: 1px solid; border-color: #fff #55514d #55514d #fff; flex: none; }
.arrowbox { width: 12px; height: 12px; display: grid; place-items: center; }
.arrowbox::after { content: ""; border: 3px solid transparent; }
.au::after { border-top: 0; border-bottom-color: #000; }
.ad { margin-top: auto; }
.ad::after { border-bottom: 0; border-top-color: #000; }
.al::after { border-left: 0; border-right-color: #000; }
.ar { margin-left: auto; }
.ar::after { border-right: 0; border-left-color: #000; }
.thumb { height: 11px; margin-top: 41px; }
.files { width: 324px; border-left: 2px solid #d4d0c8; padding-left: 1px; display: flex; flex-direction: column; }
.file-heads { height: 17px; margin-bottom: 4px; background: #d4d0c8; border-bottom: 1px solid #77736e; display: grid; grid-template-columns: 193px 86px 1fr; line-height: 16px; letter-spacing: -.42px; flex: none; border-top: 1px solid #f2efe9; }
.file-heads span { border-left: 1px solid #fff; border-right: 1px solid #77736e; padding-left: 3px; }
.file-heads span:first-child { padding-left: 10px; }
.sort { display: inline-block; margin: 0 0 3px 2px; border: 2px solid transparent; border-top: 0; border-bottom-color: #777; vertical-align: middle; }
.file-row { display: grid; grid-template-columns: 13px 171px 86px 1fr; height: 16px; align-items: center; padding-left: 12px; }
.fdate { letter-spacing: -.44px; }
.hscroll { margin-top: auto; display: flex; height: 11px; background: repeating-conic-gradient(#dedbd6 0 25%, #fff 0 50%) 0 0 / 6px 6px; }
.hscroll .arrowbox { height: 11px; }
.hthumb { width: 222px; }
.preview { flex: 1; border-left: 2px solid #d4d0c8; text-align: center; padding-top: 39px; line-height: 10px; }
</style>
